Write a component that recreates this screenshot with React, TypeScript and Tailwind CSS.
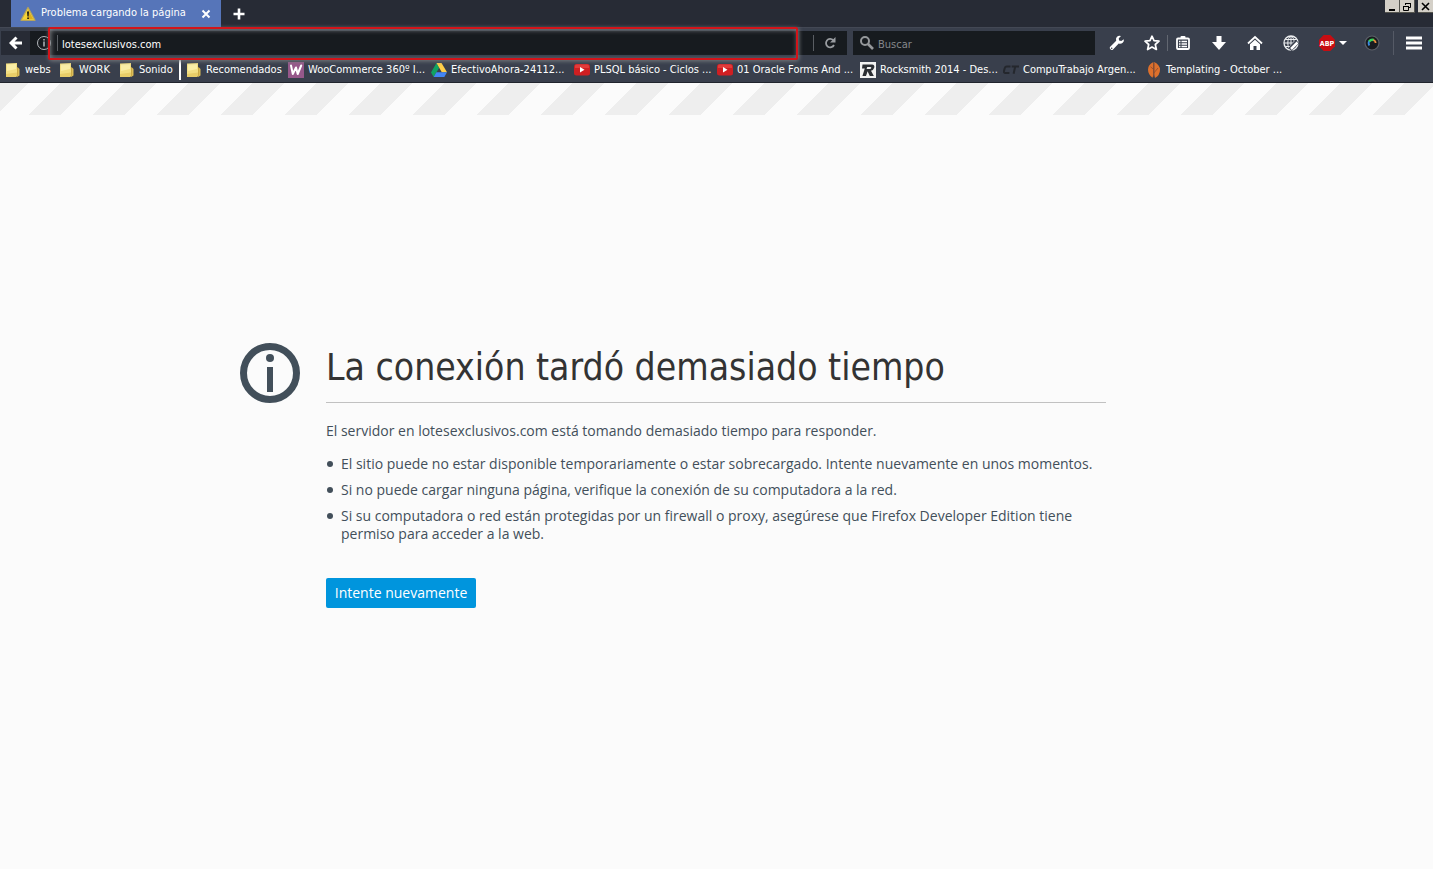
import type { ReactNode } from "react";

type Bookmark = { label: string; icon: ReactNode; width: string };

function Folder() {
  return (
    <svg viewBox="0 0 16 16" className="size-4 shrink-0" aria-hidden="true">
      <path d="M9 7l4-1.500L14.500 7v6.500L12 15z" fill="#dcbe58" />
      <path d="M11 5.500h2v8l-1 1z" fill="#c9a846" />
      <path d="M1 1.500 12 1v13l-1.500 1H1z" fill="#f3df83" />
      <path d="M2 2.500 11 2v5L2 9z" fill="#faeea6" />
      <path d="M1 12 12 10.500V14l-1.500 1H1z" fill="#e8cd68" />
    </svg>
  );
}

function WooIcon() {
  return (
    <svg viewBox="0 0 16 16" className="size-4 shrink-0" aria-hidden="true">
      <path d="M0 0h16v16H0z" fill="#96588a" />
      <path d="m3 3.500 1.800 8.500L8 5.500l1.700 6.500L13.200 3.500" fill="none" stroke="#fff" strokeWidth="2" strokeLinejoin="round" strokeLinecap="round" />
    </svg>
  );
}

function DriveIcon() {
  return (
    <svg viewBox="0 0 16 16" className="size-4 shrink-0" aria-hidden="true">
      <path d="M5.500 1 0 10.500 2.700 15 8.200 5.700z" fill="#11a261" />
      <path d="M5.500 1h5L16 10.300h-5.200z" fill="#ffcf48" />
      <path d="M5.400 10.300H16L13.300 15H2.700z" fill="#4285f4" />
    </svg>
  );
}

function VideoIcon() {
  return (
    <svg viewBox="0 0 16 16" className="size-4 shrink-0" aria-hidden="true">
      <rect y="2" width="16" height="11.500" rx="2.500" fill="#cf1f22" />
      <path d="M1 3.500Q1 2.500 3 2.500h10q2 0 2 1.500v2H1z" fill="#e23b3a" />
      <path d="m6 5 4.500 2.700L6 10.500z" fill="#fff" />
    </svg>
  );
}

function RocksmithIcon() {
  return (
    <svg viewBox="0 0 16 16" className="size-4 shrink-0" aria-hidden="true">
      <path d="M0 0h16v16H0z" fill="#f2f2f2" />
      <path d="M2.500 2.500h9.500q3 .3 2.200 3.200-.8 2.500-3.200 3l2.800 5.300h-4L7.600 9.200 6 14H2.400l2.400-7.500H2z" fill="#2b2e33" />
      <path d="m7.200 5-.6 2h3.600q1-.1 1.100-1.200 0-.8-1-.8z" fill="#f2f2f2" />
    </svg>
  );
}

function TrabajoIcon() {
  return (
    <svg viewBox="0 0 16 16" className="size-4 shrink-0" aria-hidden="true">
      <path d="M7.500 4.500H3.800Q2.200 4.500 1.700 6.200L1 9q-.4 2 1.400 2h4M8.700 4.500H16M12.200 4.500 10.600 11.800" fill="none" stroke="#24272d" strokeWidth="2" />
    </svg>
  );
}

function OctoberIcon() {
  return (
    <svg viewBox="0 0 16 16" className="size-4 shrink-0" aria-hidden="true">
      <path d="M7.400 0Q2 2.500 2 7.500q0 5 4.500 8.300L7.400 13zM8.200 0Q14 3 14 7.800q0 5.500-5 8.200l-.8-3z" fill="#dd702c" />
      <path d="M7.800 1v14M7.800 11 12 6M7.800 7.500 4.500 4.800" stroke="#8b4a2d" strokeWidth=".8" fill="none" />
    </svg>
  );
}

const bookmarks: Bookmark[] = [
  { label: "webs", icon: <Folder />, width: "w-[54px]" },
  { label: "WORK", icon: <Folder />, width: "w-[60px]" },
  { label: "Sonido", icon: <Folder />, width: "w-[60px]" },
  { label: "Recomendados", icon: <Folder />, width: "w-[102px]" },
  { label: "WooCommerce 360º I...", icon: <WooIcon />, width: "w-[143px]" },
  { label: "EfectivoAhora-24112...", icon: <DriveIcon />, width: "w-[143px]" },
  { label: "PLSQL básico - Ciclos ...", icon: <VideoIcon />, width: "w-[143px]" },
  { label: "01 Oracle Forms And ...", icon: <VideoIcon />, width: "w-[143px]" },
  { label: "Rocksmith 2014 - Des...", icon: <RocksmithIcon />, width: "w-[143px]" },
  { label: "CompuTrabajo Argen...", icon: <TrabajoIcon />, width: "w-[143px]" },
  { label: "Templating - October ...", icon: <OctoberIcon />, width: "w-[143px]" },
];

function ToolButton({ label, width, children }: { label: string; width: string; children: ReactNode }) {
  return (
    <button type="button" aria-label={label} className={`flex h-6 shrink-0 items-center justify-center gap-1 ${width}`}>
      {children}
    </button>
  );
}

function TabBar() {
  return (
    <div className="flex h-[27px] justify-between bg-[#272b35]">
      <div className="flex pl-[11px]">
        <div className="flex w-[210px] items-center bg-[#5675b9] pr-2.5 pl-[9px]">
          <svg viewBox="0 0 16 16" className="size-4 shrink-0" aria-hidden="true">
            <path d="M8 1.500 15 14.300H1z" fill="#f5d435" stroke="#b8a55a" strokeWidth="1.200" strokeLinejoin="round" />
            <path d="M8 3.500 13 13H8z" fill="#dcae1c" />
            <path d="M7 5.500h2l-.4 5H7.400zM7.200 11.500h1.700V13H7.200z" fill="#1d1d14" />
          </svg>
          <span className="ml-[5px] flex-1 whitespace-nowrap">Problema cargando la página</span>
          <button type="button" aria-label="Cerrar pestaña">
            <svg viewBox="0 0 10 10" className="size-2.5" aria-hidden="true">
              <path d="m1.500 1.500 7 7m0-7-7 7" stroke="#fff" strokeWidth="2" />
            </svg>
          </button>
        </div>
        <button type="button" aria-label="Nueva pestaña" className="flex w-9 items-center justify-center">
          <svg viewBox="0 0 12 12" className="size-3" aria-hidden="true">
            <path d="M6 .500v11M.500 6h11" stroke="#fff" strokeWidth="2.600" />
          </svg>
        </button>
      </div>
      <div className="flex h-[13px] items-stretch">
        <WindowButton label="Minimizar">
          <path d="M4 9h6" stroke="#000" strokeWidth="2" />
        </WindowButton>
        <WindowButton label="Restaurar">
          <path d="M5.500 4V2.500h5v4H9M5 2.500h6M3.500 5.500h5v4h-5zM3 5.500h6" fill="none" stroke="#000" />
        </WindowButton>
        <span className="w-[3px]" />
        <WindowButton label="Cerrar">
          <path d="m4 2 7 7m0-7L4 9" stroke="#000" strokeWidth="1.600" />
        </WindowButton>
      </div>
    </div>
  );
}

function WindowButton({ label, children }: { label: string; children: ReactNode }) {
  return (
    <button type="button" aria-label={label} className="w-[15px] border-r border-b border-[#55554f] bg-[#d4d0c8] last:border-r-0">
      <svg viewBox="0 0 14 11" className="h-[11px] w-[14px]" aria-hidden="true">
        {children}
      </svg>
    </button>
  );
}

function NavBar() {
  return (
    <div className="flex items-center border-t border-[#434854] pt-[3px]">
      <button type="button" aria-label="Atrás" className="ml-px flex h-6 w-[29px] shrink-0 items-center justify-center bg-[#272b35]">
        <svg viewBox="0 0 14 14" className="size-3.5" aria-hidden="true">
          <path d="M7.500 1.500 2 7l5.500 5.500M2 7h11" fill="none" stroke="#fff" strokeWidth="3" />
        </svg>
      </button>
      <div className="relative flex h-6 min-w-0 flex-1 items-center bg-[#171b1f]">
        <svg viewBox="0 0 16 16" className="ml-1.5 size-4 shrink-0" aria-hidden="true">
          <circle cx="8" cy="8" r="6.500" fill="none" stroke="#b4b8bc" />
          <path d="M8 6.500v5M8 4v1.500" stroke="#b4b8bc" strokeWidth="1.500" />
        </svg>
        <span className="ml-[5px] h-4 w-px bg-[#5a5e63]" />
        <input aria-label="Dirección" defaultValue="lotesexclusivos.com" className="h-6 min-w-0 flex-1 bg-transparent pt-0.5 pl-1 text-white outline-none" />
        <span className="h-4 w-px bg-[#5a5e63]" />
        <button type="button" aria-label="Recargar" className="flex h-6 w-[33px] items-center justify-center pr-0.5">
          <svg viewBox="0 0 12 12" className="size-3" aria-hidden="true">
            <path d="M9.200 3.200A4.200 4.200 0 1 0 10 8" fill="none" stroke="#9a9da1" strokeWidth="1.800" />
            <path d="M11.500 0v5.500H6z" fill="#9a9da1" />
          </svg>
        </button>
        <div className="pointer-events-none absolute -top-1 right-[49px] -bottom-[5px] left-[18px] rounded-xs border-2 border-[#d3141a] shadow-[1px_1px_4px_#7a7d80,inset_1px_1px_5px_#7a7d80]" />
      </div>
      <label className="ml-1.5 flex h-6 w-[242px] items-center bg-[#171b1f] pl-1.5">
        <svg viewBox="0 0 16 16" className="size-4 shrink-0" aria-hidden="true">
          <circle cx="6" cy="6" r="4" fill="none" stroke="#95989b" strokeWidth="2" />
          <path d="m9 9 5 5" stroke="#95989b" strokeWidth="2.600" />
        </svg>
        <input aria-label="Buscar" placeholder="Buscar" className="ml-[3px] h-6 min-w-0 flex-1 bg-transparent pt-0.5 outline-none placeholder:text-[#85888b]" />
      </label>
      <span className="w-[3px]" />
      <ToolButton label="Herramientas" width="w-[38px]">
        <svg viewBox="0 0 16 16" className="size-4" aria-hidden="true">
          <path d="M14.800 4.200 12.300 6 10 5.500 9.800 3.300 12 1Q9.500.2 7.800 2 6.500 3.600 7.200 5.800L1 12q-.8 1 .4 2.300 1.200 1.200 2.400.4L9.700 8.600q2.200.8 4-.8 1.600-1.500 1.100-3.600z" fill="#fff" />
          <circle cx="2.700" cy="13.200" r=".8" fill="#393f4c" />
        </svg>
      </ToolButton>
      <ToolButton label="Marcar esta página" width="w-[32px]">
        <svg viewBox="0 0 16 16" className="size-4" aria-hidden="true">
          <path d="m8 1.200 2 4.500 5 .5-3.700 3.300 1.100 5L8 12l-4.400 2.500 1.100-5L1 6.200l5-.5z" fill="none" stroke="#fff" strokeWidth="1.700" strokeLinejoin="round" />
        </svg>
      </ToolButton>
      <span className="-ml-px h-4 w-px bg-[#626771]" />
      <ToolButton label="Mostrar marcadores" width="w-[30px]">
        <svg viewBox="0 0 16 16" className="size-4" aria-hidden="true">
          <path d="M3 3.500h10q1 0 1 1v8.500q0 1-1 1H3q-1 0-1-1V4.500q0-1 1-1z" fill="none" stroke="#fff" strokeWidth="1.800" />
          <path d="M5.500 3.500V2q0-1 1-1h3q1 0 1 1v1.500z" fill="#fff" />
          <path d="M4 6.500h1.500m1 0H12M4 9h1.500m1 0H12M4 11.500h1.500m1 0H12" stroke="#fff" strokeWidth="1.400" />
        </svg>
      </ToolButton>
      <ToolButton label="Descargas" width="w-[42px]">
        <svg viewBox="0 0 16 16" className="size-4" aria-hidden="true">
          <path d="M5.500 1h5v6H15l-7 8-7-8h4.500z" fill="#fff" />
        </svg>
      </ToolButton>
      <ToolButton label="Inicio" width="w-[30px]">
        <svg viewBox="0 0 16 16" className="size-4" aria-hidden="true">
          <path d="m1 8.500 7-6.500 7 6.500" fill="none" stroke="#fff" strokeWidth="1.800" />
          <path d="M3 9.200 8 4.700l5 4.500V15H9.500v-4h-3v4H3z" fill="#fff" />
        </svg>
      </ToolButton>
      <ToolButton label="Editor web" width="w-[42px]">
        <svg viewBox="0 0 16 16" className="size-4" aria-hidden="true">
          <circle cx="8" cy="8" r="7" fill="none" stroke="#eceef0" strokeWidth="1.300" />
          <ellipse cx="8" cy="8" rx="3.200" ry="6.700" fill="none" stroke="#eceef0" />
          <path d="M8 1v14M1 8h14M2.500 4.500h11M2.500 11.500h9" stroke="#eceef0" />
          <path d="m7 14.500 7.500-8" stroke="#393f4c" strokeWidth="4.500" />
          <path d="m8 14 6.500-6.500" stroke="#fff" strokeWidth="2.500" />
        </svg>
      </ToolButton>
      <ToolButton label="Bloqueador de anuncios" width="w-[42px]">
        <svg viewBox="0 0 16 16" className="size-4" aria-hidden="true">
          <path d="M4.700 0h6.600L16 4.700v6.600L11.300 16H4.700L0 11.300V4.700z" fill="#c70d12" />
          <text x="8" y="10.500" textAnchor="middle" fontSize="7" fontWeight="700" fill="#fff">ABP</text>
        </svg>
        <svg viewBox="0 0 8 4" className="h-1 w-2" aria-hidden="true">
          <path d="M0 0h8L4 4z" fill="#fff" />
        </svg>
      </ToolButton>
      <ToolButton label="Colores" width="w-9">
        <svg viewBox="0 0 16 16" className="size-4" aria-hidden="true">
          <circle cx="8" cy="8" r="7" fill="#191c20" stroke="#5c6068" strokeWidth="1.200" />
          <path d="M5.300 10.500Q3.800 7.500 5.500 5.800" fill="none" stroke="#3b8ce0" strokeWidth="1.800" />
          <path d="M5.200 6.500Q7 4 9.800 5" fill="none" stroke="#35d35a" strokeWidth="2.400" />
          <path d="M9.300 5q2.300.8 2.300 3" fill="none" stroke="#ec8f3c" strokeWidth="1.800" />
        </svg>
      </ToolButton>
      <span className="ml-[3px] h-6 w-px bg-[#555a66]" />
      <ToolButton label="Menú" width="w-[39px]">
        <svg viewBox="0 0 16 14" className="h-3.5 w-4" aria-hidden="true">
          <path d="M0 2h16M0 7h16M0 12h16" stroke="#fff" strokeWidth="3" />
        </svg>
      </ToolButton>
    </div>
  );
}

function BookmarksBar() {
  return (
    <nav aria-label="Marcadores" className="flex h-[28px] items-center overflow-hidden border-b border-[#20242d] pt-0.5 pl-[5px]">
      {bookmarks.map((item, index) => (
        <a key={item.label} href="#" className={`flex h-5 shrink-0 items-center gap-1 whitespace-nowrap ${item.width} ${index === 3 ? "box-content border-l-2 border-white pl-[5px]" : ""}`}>
          {item.icon}
          <span className="pt-0.5">{item.label}</span>
        </a>
      ))}
    </nav>
  );
}

const reasons = [
  "El sitio puede no estar disponible temporariamente o estar sobrecargado. Intente nuevamente en unos momentos.",
  "Si no puede cargar ninguna página, verifique la conexión de su computadora a la red.",
  "Si su computadora o red están protegidas por un firewall o proxy, asegúrese que Firefox Developer Edition tiene permiso para acceder a la web.",
];

export default function App() {
  return (
    <div className="flex min-h-screen flex-col bg-[#fbfbfb] font-['DejaVu_Sans_Condensed','DejaVu_Sans',sans-serif]">
      <header className="bg-[#393f4c] text-[11px] text-white">
        <TabBar />
        <NavBar />
        <BookmarksBar />
      </header>
      <div className="h-8 bg-[linear-gradient(-45deg,#eee,#eee_33%,#fbfbfb_33%,#fbfbfb_66%,#eee_66%,#eee)] bg-[length:64px_32px] bg-[position:-4px_0]" />
      <main className="grid flex-1 grid-cols-[1fr_minmax(0,780px)_1fr] content-center pr-px pb-[34px] font-['Open_Sans','Noto_Sans',sans-serif] text-[14px] leading-[18px] text-[#424f5a]">
        <svg viewBox="0 0 60 60" className="mr-[26px] size-[60px] justify-self-end" aria-hidden="true">
          <circle cx="30" cy="30" r="26.500" fill="none" stroke="#424f5a" strokeWidth="7" />
          <circle cx="30" cy="15" r="4" fill="#424f5a" />
          <path d="M27 24h6v25h-6z" fill="#424f5a" />
        </svg>
        <section>
          <h1 className="border-b border-[#c1c1c1] pb-[9px] font-['DejaVu_Sans_Condensed','DejaVu_Sans',sans-serif] text-[37px] leading-[50px] text-[#333]">La conexión tardó demasiado tiempo</h1>
          <p className="mt-[19px]">El servidor en lotesexclusivos.com está tomando demasiado tiempo para responder.</p>
          <ul className="mt-[15px] space-y-2">
            {reasons.map((reason) => (
              <li key={reason} className="flex gap-2">
                <span className="mt-1.5 ml-px size-1.5 shrink-0 rounded-full bg-[#424f5a]" />
                <span>{reason}</span>
              </li>
            ))}
          </ul>
          <button type="button" className="mt-[35px] h-[30px] w-[150px] rounded-xs bg-[#0095dd] text-white">Intente nuevamente</button>
        </section>
      </main>
    </div>
  );
}
